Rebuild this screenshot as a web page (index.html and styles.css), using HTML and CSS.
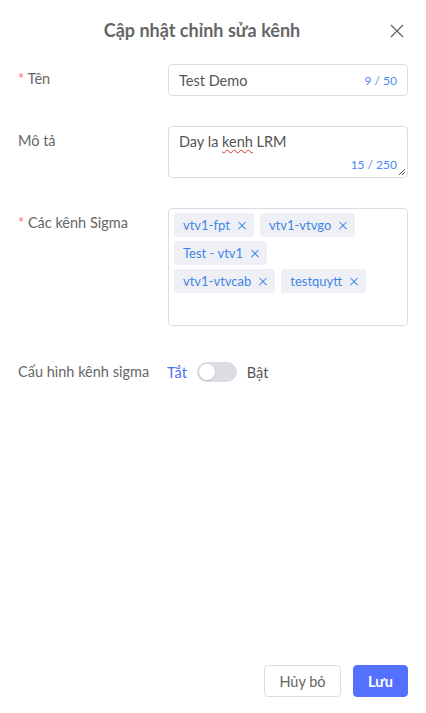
FILE: index.html
```html
<!DOCTYPE html>
<html lang="vi">
<head>
<meta charset="utf-8">
<link rel="stylesheet" href="styles.css">
</head>
<body>
<div class="modal">
  <div class="header">
    <div class="title">Cập nhật chỉnh sửa kênh</div>
    <button class="close" aria-label="close">
      <svg width="14" height="14" viewBox="0 0 14 14"><path d="M1 1L13 13M13 1L1 13" stroke="#666" stroke-width="1.3" fill="none"/></svg>
    </button>
  </div>
  <div class="form">
    <div class="row row-input">
      <div class="label"><span class="req">*</span> Tên</div>
      <div class="control input">
        <span class="value">Test Demo</span>
        <span class="count">9 / 50</span>
      </div>
    </div>
    <div class="row row-textarea">
      <div class="label">Mô tả</div>
      <div class="control textarea">
        <span class="value">Day la <span class="spell">kenh</span> LRM</span>
        <span class="count">15 / 250</span>
        <svg class="grip" width="8" height="8" viewBox="0 0 8 8"><path d="M7 1L1 7M7 4L4 7" stroke="#555" stroke-width="1"/></svg>
      </div>
    </div>
    <div class="row row-tags">
      <div class="label"><span class="req">*</span> Các kênh Sigma</div>
      <div class="control tags">
        <div class="tag-line">
          <span class="tag">vtv1-fpt <i class="x"></i></span>
          <span class="tag">vtv1-vtvgo <i class="x"></i></span>
        </div>
        <div class="tag-line">
          <span class="tag">Test - vtv1 <i class="x"></i></span>
        </div>
        <div class="tag-line">
          <span class="tag">vtv1-vtvcab <i class="x"></i></span>
          <span class="tag">testquytt <i class="x"></i></span>
        </div>
      </div>
    </div>
    <div class="row row-switch">
      <div class="label label-auto">Cấu hình kênh sigma</div>
      <span class="off">Tắt</span>
      <span class="switch"><span class="knob"></span></span>
      <span class="on">Bật</span>
    </div>
  </div>
  <div class="footer">
    <button class="btn btn-cancel">Hủy bỏ</button>
    <button class="btn btn-save">Lưu</button>
  </div>
</div>
</body>
</html>
```
FILE: styles.css
```css
* { box-sizing: border-box; }
html, body { margin: 0; padding: 0; background: #fff; }
body {
  font-family: Lato, "Noto Sans", sans-serif;
  color: #666;
  font-size: 14.5px;
}
.modal {
  width: 426px;
  height: 713px;
  display: flex;
  flex-direction: column;
  padding: 0 18px;
}
.header {
  position: relative;
  height: 64px;
  display: flex;
  align-items: center;
  justify-content: center;
  padding: 0 22px 4px 0;
}
.title {
  font-size: 18px;
  font-weight: 700;
  color: #666;
}
.close {
  position: absolute;
  right: 4px;
  top: 24px;
  border: 0;
  background: none;
  padding: 0;
  width: 14px;
  height: 14px;
  display: flex;
}
.form { flex: 1; display: flex; flex-direction: column; }
.row { display: flex; align-items: flex-start; }
.label {
  width: 150px;
  flex: none;
  font-size: 14.5px;
  color: #666;
  line-height: 20px;
}
.req { color: #ff6b6b; }
.control {
  width: 240px;
  border: 1px solid #dcdde3;
  border-radius: 4px;
  background: #fff;
}
.value { color: #555; font-size: 14.5px; }
.count { color: #4a8af4; font-size: 12px; }
.row-input .label { padding-top: 5px; }
.row-input .control {
  height: 32px;
  display: flex;
  align-items: center;
  justify-content: space-between;
  padding: 0 10px;
}
.row-textarea { margin-top: 30px; }
.row-textarea .label { padding-top: 5px; }
.row-textarea .control {
  height: 52px;
  position: relative;
  padding: 5px 10px;
  line-height: 20px;
}
.spell {
  text-decoration: underline wavy #e03030;
  text-decoration-thickness: 1px;
  text-underline-offset: 2px;
}
.row-textarea .count {
  position: absolute;
  right: 10px;
  bottom: 4px;
  line-height: 16px;
}
.grip { position: absolute; right: 1px; bottom: 1px; }
.row-tags { margin-top: 30px; }
.row-tags .label { padding-top: 5px; }
.tags {
  height: 118px;
  display: flex;
  flex-direction: column;
  gap: 4px;
  padding: 4px 5px;
}
.tag-line { display: flex; gap: 6px; }
.tag {
  height: 24px;
  display: inline-flex;
  align-items: center;
  gap: 8px;
  padding: 0 8px 0 9px;
  background: #eef0f5;
  border-radius: 3px;
  color: #3e86e8;
  font-size: 13px;
}
.x {
  width: 8px;
  height: 8px;
  position: relative;
  display: inline-block;
}
.x::before, .x::after {
  content: "";
  position: absolute;
  left: -1px;
  top: 3.5px;
  width: 10px;
  height: 1.2px;
  background: #3e86e8;
  transform: rotate(45deg);
}
.x::after { transform: rotate(-45deg); }
.row-switch {
  margin-top: 36px;
  align-items: center;
  height: 20px;
}
.label-auto { width: auto; margin-right: 18px; }
.off { color: #4a6cf7; }
.switch {
  width: 40px;
  height: 20px;
  border-radius: 10px;
  background: #dcdde3;
  margin: 0 10px 0 10px;
  position: relative;
  display: inline-block;
}
.knob {
  position: absolute;
  left: 2px;
  top: 2px;
  width: 16px;
  height: 16px;
  border-radius: 50%;
  background: #fff;
  box-shadow: 0 1px 2px rgba(0,0,0,0.15);
}
.on { color: #555; }
.footer {
  display: flex;
  justify-content: flex-end;
  gap: 12px;
  padding-bottom: 16px;
}
.btn {
  height: 32px;
  border-radius: 4px;
  font-family: inherit;
  font-size: 14.5px;
  padding: 0 8px;
}
.btn-cancel {
  width: 77px;
  background: #fff;
  border: 1px solid #dcdde3;
  color: #666;
}
.btn-save {
  width: 55px;
  background: #5470ff;
  border: 1px solid #5470ff;
  color: #fff;
  font-weight: 700;
}
```
